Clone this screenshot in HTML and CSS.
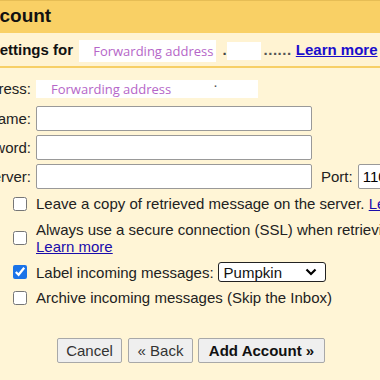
FILE: index.html
```html
<!DOCTYPE html>
<html lang="en">
<head>
    <meta charset="UTF-8">
    <title>Add a mail account</title>
    <link rel="stylesheet" href="styles.css">
</head>
<body>
    <div class="sheet">
        <div class="title-bar">Add a mail account</div>

        <div class="intro">
            Enter the mail settings for
            <span class="redacted">Forwarding address</span><span class="dot">.</span><span class="blob"></span><span class="dots">......</span>
            <a href="#" class="link-bold">Learn more</a>
        </div>

        <form class="account-form">
            <div class="field-row">
                <label>Email address:</label>
                <div class="field">
                    <span class="redacted redacted-wide">Forwarding address</span><span class="tick">·</span>
                </div>
            </div>

            <div class="field-row">
                <label for="username">Username:</label>
                <div class="field"><input type="text" id="username"></div>
            </div>

            <div class="field-row">
                <label for="password">Password:</label>
                <div class="field"><input type="password" id="password"></div>
            </div>

            <div class="field-row">
                <label for="server">POP Server:</label>
                <div class="field">
                    <input type="text" id="server">
                    <span class="port-label">Port:</span>
                    <input type="text" class="port" value="110">
                </div>
            </div>

            <div class="options">
                <label class="option">
                    <input type="checkbox">
                    <span>Leave a copy of retrieved message on the server. <a href="#">Learn more</a></span>
                </label>

                <label class="option">
                    <input type="checkbox">
                    <span>Always use a secure connection (SSL) when retrieving mail.<br><a href="#">Learn more</a></span>
                </label>

                <label class="option">
                    <input type="checkbox" checked>
                    <span>Label incoming messages:</span>
                    <span class="select-box">Pumpkin
                        <svg width="12" height="8" viewBox="0 0 12 8"><path d="M1.5 1.5 L6 6 L10.5 1.5" fill="none" stroke="#000" stroke-width="2.2"/></svg>
                    </span>
                </label>

                <label class="option">
                    <input type="checkbox">
                    <span>Archive incoming messages (Skip the Inbox)</span>
                </label>
            </div>

            <div class="actions">
                <button type="button" class="btn btn-cancel">Cancel</button>
                <button type="button" class="btn btn-back">&laquo; Back</button>
                <button type="submit" class="btn btn-primary">Add Account &raquo;</button>
            </div>
        </form>
    </div>
</body>
</html>
```

FILE: styles.css
```css
* {
    margin: 0;
    padding: 0;
    box-sizing: border-box;
}

body {
    font-family: 'Liberation Sans', Arial, sans-serif;
    font-size: 15px;
    color: #222;
    background: #fff5d6;
    overflow: hidden;
    width: 380px;
    height: 380px;
}

.sheet {
    margin-left: -140px;
    width: 700px;
}

.title-bar {
    background: #f9d065;
    border-top: 1px solid #e6bd55;
    height: 33px;
    padding-left: 17px;
    font-size: 19px;
    font-weight: 700;
    color: #111;
    line-height: 30px;
    white-space: nowrap;
}

.intro {
    background: #fff3d2;
    height: 35px;
    border-bottom: 2px solid #f7cf66;
    padding-left: 28px;
    font-weight: 700;
    line-height: 34px;
    white-space: nowrap;
    color: #111;
}

.redacted {
    display: inline-block;
    background: #fff;
    color: #b566c8;
    font-family: 'Open Sans', sans-serif;
    font-weight: 400;
    font-size: 13px;
    line-height: 22px;
    padding: 0 3px 0 14px;
    vertical-align: middle;
    margin-left: 2px;
}

.dot {
    color: #444;
    margin-left: 6px;
}

.blob {
    display: inline-block;
    width: 34px;
    height: 18px;
    background: #fff;
    vertical-align: middle;
}

.dots {
    color: #555;
    font-weight: 700;
    letter-spacing: 0.5px;
    margin-left: 3px;
}

a {
    color: #1a0dab;
}

.link-bold {
    color: #1a0dcc;
}

.account-form {
    padding-top: 8px;
}

.field-row {
    display: grid;
    grid-template-columns: 171px 1fr;
    column-gap: 5px;
    align-items: center;
    margin-bottom: 4px;
}

.field-row:first-child {
    margin-bottom: 5px;
}

.field-row label {
    text-align: right;
    white-space: nowrap;
}

.field {
    display: flex;
    align-items: center;
    height: 25px;
    white-space: nowrap;
}

.redacted-wide {
    width: 222px;
    height: 18px;
    line-height: 18px;
    padding-left: 15px;
    margin-left: 0;
}

.tick {
    color: #555;
    margin-left: -45px;
    margin-top: -8px;
}

input[type="text"],
input[type="password"] {
    width: 276px;
    height: 25px;
    border: 1px solid #999;
    border-radius: 2px;
    background: #fff;
    font-family: 'Liberation Sans', Arial, sans-serif;
    font-size: 15px;
    padding: 0 4px;
}

.port-label {
    margin-left: 9px;
    margin-right: 5px;
}

input.port {
    width: 60px;
}

.options {
    margin-top: 6px;
    padding-left: 153px;
}

.option {
    display: flex;
    align-items: center;
    gap: 9px;
    line-height: 17px;
    white-space: nowrap;
    margin-bottom: 7px;
}

.option:first-child {
    margin-bottom: 9px;
}

.option input[type="checkbox"] {
    width: 14px;
    height: 14px;
    margin: 0;
    accent-color: #1a73e8;
    flex-shrink: 0;
}

.select-box {
    display: inline-flex;
    align-items: center;
    justify-content: space-between;
    width: 108px;
    height: 20px;
    border: 1px solid #222;
    border-radius: 3px;
    background: #fff;
    color: #111;
    padding: 0 8px 0 5px;
    margin-left: -5px;
}

.actions {
    padding-left: 197px;
    margin-top: 32px;
    display: flex;
}

.btn {
    height: 25px;
    background: #efefef;
    border: 1px solid #a8a8a8;
    border-radius: 2px;
    font-family: 'Liberation Sans', Arial, sans-serif;
    font-size: 15px;
    color: #333;
    text-align: center;
}

.btn-cancel {
    width: 65px;
}

.btn-back {
    width: 65px;
    margin-left: 6px;
}

.btn-primary {
    width: 127px;
    margin-left: 5px;
    font-weight: 700;
    color: #111;
}
```
